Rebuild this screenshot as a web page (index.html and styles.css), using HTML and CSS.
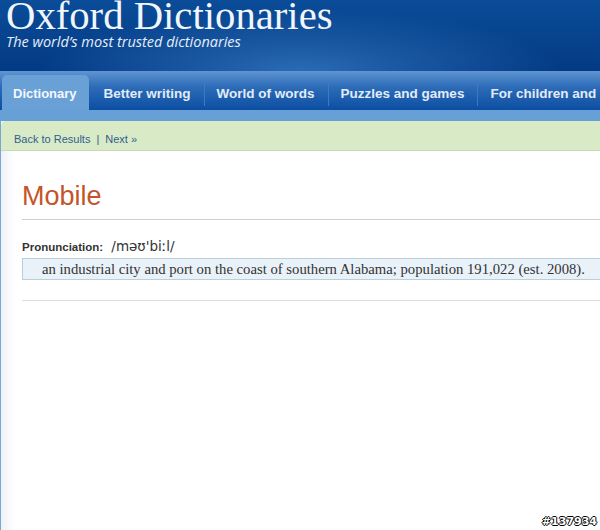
FILE: index.html
```html
<!doctype html>
<html>
<head>
	<meta charset="utf-8">
	<title>Mobile - Oxford Dictionaries</title>
	<link rel="stylesheet" href="styles.css">
</head>
<body>
	<!-- 页头 -->
	<div class="header">
		<div class="logo">Oxford Dictionaries</div>
		<div class="tagline">The world’s most trusted dictionaries</div>
	</div>
	<!-- 导航 -->
	<ul class="nav">
		<li class="current">Dictionary</li>
		<li>Better writing</li>
		<li>World of words</li>
		<li>Puzzles and games</li>
		<li>For children and schools</li>
	</ul>
	<div class="strip"></div>
	<!-- 主体 -->
	<div class="main">
		<div class="crumbs"><a href="">Back to Results</a><span>|</span><a href="">Next »</a></div>
		<div class="entry">
			<h1>Mobile</h1>
			<p class="pron"><b>Pronunciation:</b> <span>/məʊ'biːl/</span></p>
			<p class="def">an industrial city and port on the coast of southern Alabama; population 191,022 (est. 2008).</p>
			<div class="rule"></div>
		</div>
	</div>
	<div class="stamp">#137934</div>
</body>
</html>
```
FILE: styles.css
```css
html,body{margin:0;padding:0;background:#fff;}
body{font-family:"Liberation Sans",Arial,sans-serif;overflow:hidden;height:530px;position:relative;}
ul,p,h1{margin:0;padding:0;list-style:none;}
/* 页头 */
.header{
	height:71px;
	box-sizing:border-box;
	padding:0 0 0 6px;
	background:radial-gradient(ellipse 260px 60px at 300px 70px,#2a6ab4,rgba(42,106,180,0)),linear-gradient(#0a4c98,#043a84);
	color:#fff;
	overflow:hidden;
	white-space:nowrap;
}
.logo{
	font-family:"Liberation Serif","Times New Roman",serif;
	font-size:40.7px;
	line-height:29px;
	padding-top:1px;
	color:#f2f6fb;
}
.tagline{
	font-family:"Open Sans",sans-serif;
	font-style:italic;
	font-size:14.5px;
	line-height:18px;
	margin-top:3px;
	color:#e6eef8;
}
/* 导航 */
.nav{
	display:flex;
	height:39px;
	padding-top:4px;
	box-sizing:border-box;
	background:linear-gradient(#5f95d2 0,#2d6cb8 40%,#0c4ea2 100%);
	white-space:nowrap;
	overflow:hidden;
}
.nav li{
	font-weight:bold;
	font-size:13.5px;
	color:#e2ecf8;
	padding:0 13px 0 14px;
	line-height:37px;
	height:35px;
	box-sizing:border-box;
	position:relative;
}
.nav li + li:before{
	content:"";
	position:absolute;
	left:0;
	top:4px;
	bottom:4px;
	width:1px;
	background:#3f7ac0;
}
.nav li.current{
	margin-left:2px;
	padding:0 12px 0 11px;
	font-size:13px;
	background:#69a1d7;
	border-radius:5px 5px 0 0;
	color:#f4f8fc;
}
.nav li.current + li:before{display:none;}
.nav li:nth-child(2){padding-left:15px;}
.nav li:nth-child(n+3){padding-left:13px;}
.strip{height:11px;background:#66a0d6;}
/* 主体 */
.main{
	border-left:1px solid #7aa6d4;
	background:linear-gradient(90deg,#eef3f8 0,#fff 14px);
	height:420px;
}
.crumbs{
	height:30px;
	background:#d9eac6;
	border-radius:5px 0 0 0;
	border-bottom:1px solid #c9d8bb;
	box-sizing:border-box;
	padding-left:13px;
	font-size:11px;
	line-height:36px;
}
.crumbs a{color:#2f5f8f;text-decoration:none;}
.crumbs span{color:#2f5f8f;margin:0 6px;}
.entry{padding:29px 0 0 21px;}
h1{
	font-weight:normal;
	font-size:27px;
	line-height:32px;
	color:#c4542a;
	padding-bottom:7px;
	border-bottom:1px solid #cfcfcf;
}
.pron{
	margin-top:18px;
	height:16px;
	font-size:11.5px;
	line-height:16px;
	color:#333;
}
.pron b{color:#333;}
.pron span{font-family:"DejaVu Sans",sans-serif;font-size:13.5px;line-height:16px;margin-left:5px;}
.def{
	margin-top:4px;
	height:22px;
	box-sizing:border-box;
	background:#e9f1f9;
	border:1px solid #bccddc;
	border-right:0;
	padding-left:19px;
	font-family:"Liberation Serif",Georgia,serif;
	font-size:14.7px;
	line-height:20px;
	color:#333;
	white-space:nowrap;
}
.rule{margin-top:20px;border-top:1px solid #ddd;}
/* 水印 */
.stamp{
	position:absolute;
	right:3px;
	bottom:2px;
	font-family:"DejaVu Sans",sans-serif;
	font-weight:bold;
	font-size:11px;
	color:#fff;
	text-shadow:-1px 0 #000,1px 0 #000,0 -1px #000,0 1px #000;
}
```
